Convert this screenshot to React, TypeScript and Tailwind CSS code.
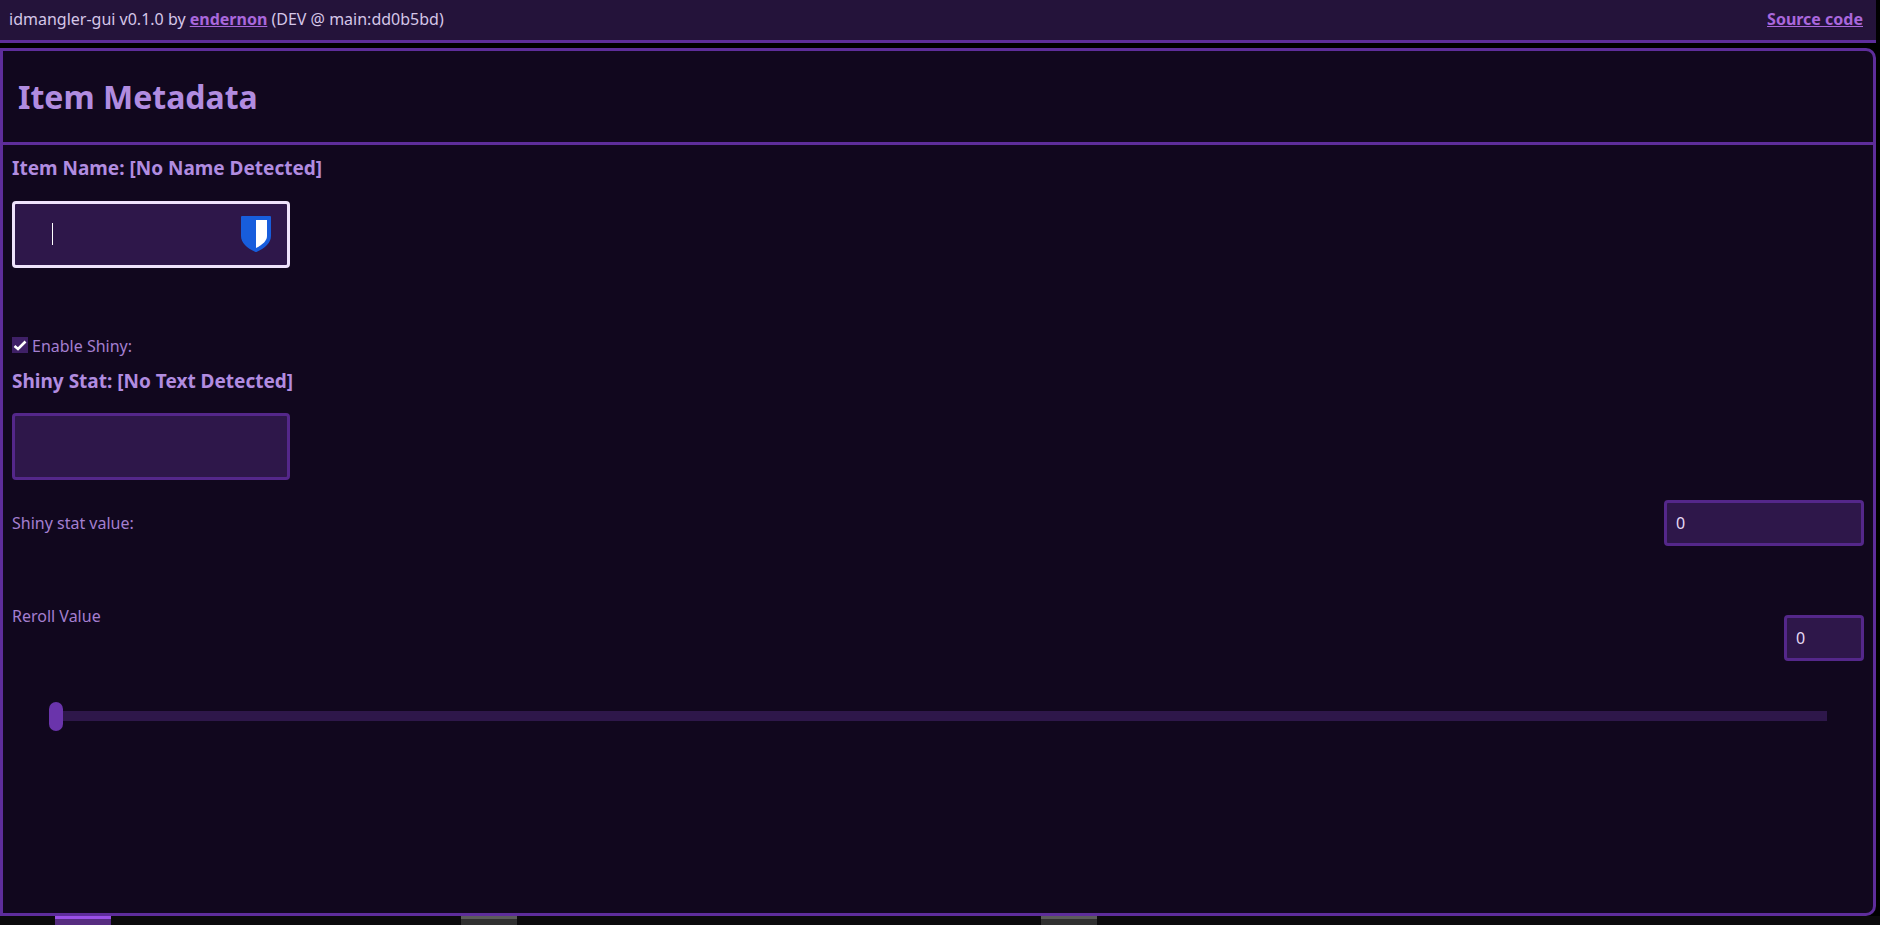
import { useState } from "react";

const fieldClass =
  "rounded-[4px] border-[3px] border-[#54278a] bg-[#2e174a] text-[#e6d9f5] outline-none";

const rangeClass =
  "block h-[29px] w-full appearance-none bg-transparent outline-none " +
  "[&::-webkit-slider-runnable-track]:h-[10px] [&::-webkit-slider-runnable-track]:bg-[#2e174a] " +
  "[&::-webkit-slider-thumb]:mt-[-9px] [&::-webkit-slider-thumb]:h-[29px] [&::-webkit-slider-thumb]:w-[14px] " +
  "[&::-webkit-slider-thumb]:appearance-none [&::-webkit-slider-thumb]:rounded-[7px] [&::-webkit-slider-thumb]:bg-[#6a34ab]";

function ShieldIcon() {
  return (
    <svg width="30" height="36" viewBox="0 0 30 36" aria-hidden="true">
      <path
        d="M1 0H29Q30 0 30 1V20C30 26.5 24 32.5 16 35.7Q15 36.2 14 35.7C6 32.5 0 26.5 0 20V1Q0 0 1 0Z"
        fill="#175ddc"
      />
      <path d="M15 4H26V20C26 24.5 22 28.5 15 32Z" fill="#ffffff" />
    </svg>
  );
}

function Header() {
  return (
    <header className="mr-1 flex justify-between border-b-[3px] border-[#5e2d9b] bg-[#24133a] pt-2 pr-[13px] pb-[10px] pl-[9px] leading-[22px] text-[#d5c6e8]">
      <p>
        idmangler-gui v0.1.0 by{" "}
        <a href="#endernon" className="font-bold text-[#a967dc] underline">
          endernon
        </a>{" "}
        (DEV @ main:dd0b5bd)
      </p>
      <a href="#source" className="font-bold text-[#a967dc] underline">
        Source code
      </a>
    </header>
  );
}

function Metadata() {
  const [name, setName] = useState("");
  const [shiny, setShiny] = useState(true);
  const [stat, setStat] = useState("");
  const [statValue, setStatValue] = useState("0");
  const [reroll, setReroll] = useState("0");

  return (
    <main className="mt-[5px] mr-1 flex-1 rounded-r-[10px] border-[3px] border-[#5e2d9b] bg-[#11071e]">
      <h1 className="border-b-[3px] border-[#5e2d9b] px-[15px] py-6 text-[32px] leading-[43px] font-bold text-[#b18ce0]">
        Item Metadata
      </h1>
      <div className="flex flex-col items-start p-[9px] leading-6 text-[#a47fd0]">
        <label htmlFor="name" className="text-[19px] leading-7 font-bold text-[#b18ce0]">
          Item Name: [No Name Detected]
        </label>
        <div className="relative mt-[19px]">
          <input
            id="name"
            type="text"
            value={name}
            onChange={(e) => setName(e.target.value)}
            className="block h-[67px] w-[278px] rounded-[4px] border-[3px] border-[#efe2fc] bg-[#2e174a] px-[37px] text-[#e6d9f5] outline-none"
          />
          <span className="absolute top-[22px] left-10 h-[22px] w-px bg-white" />
          <span className="absolute top-[15px] right-[19px]">
            <ShieldIcon />
          </span>
        </div>

        <label className="mt-[66px] flex items-start gap-1">
          <span className="relative mt-[3px] flex h-4 w-4">
            <input
              type="checkbox"
              checked={shiny}
              onChange={(e) => setShiny(e.target.checked)}
              className="h-4 w-4 appearance-none bg-[#3f2067]"
            />
            {shiny && (
              <svg className="pointer-events-none absolute inset-0" viewBox="0 0 16 16" aria-hidden="true">
                <path d="M2.5 9L6 12L13.5 4.5" fill="none" stroke="#ffffff" strokeWidth="2.6" />
              </svg>
            )}
          </span>
          Enable Shiny:
        </label>

        <label htmlFor="stat" className="mt-[9px] text-[19px] leading-7 font-bold text-[#b18ce0]">
          Shiny Stat: [No Text Detected]
        </label>
        <input
          id="stat"
          type="text"
          value={stat}
          onChange={(e) => setStat(e.target.value)}
          className={`${fieldClass} mt-[18px] h-[67px] w-[278px] px-[37px]`}
        />

        <div className="mt-5 flex w-full items-center justify-between">
          <label htmlFor="stat-value">Shiny stat value:</label>
          <input
            id="stat-value"
            type="text"
            inputMode="numeric"
            value={statValue}
            onChange={(e) => setStatValue(e.target.value)}
            className={`${fieldClass} h-[46px] w-[200px] px-[9px]`}
          />
        </div>

        <div className="mt-[58px] flex w-full items-start justify-between">
          <label htmlFor="reroll">Reroll Value</label>
          <input
            id="reroll"
            type="text"
            inputMode="numeric"
            value={reroll}
            onChange={(e) => setReroll(e.target.value)}
            className={`${fieldClass} mt-[11px] h-[46px] w-20 px-[9px]`}
          />
        </div>

        <div className="mt-10 w-full px-[37px]">
          <input
            type="range"
            aria-label="Reroll Value"
            min={0}
            max={100}
            value={Number(reroll) || 0}
            onChange={(e) => setReroll(e.target.value)}
            className={rangeClass}
          />
        </div>
      </div>
    </main>
  );
}

function Dock() {
  return (
    <footer className="flex h-[9px] bg-[#0b0a0c] pl-[55px]">
      <div className="w-14 border-t-[3px] border-[#9a50e6] bg-[#562c80]" />
      <div className="ml-[350px] w-14 border-t-[3px] border-[#5c5c5c] bg-[#303030]" />
      <div className="ml-[524px] w-14 border-t-[3px] border-[#5c5c5c] bg-[#303030]" />
    </footer>
  );
}

export default function App() {
  return (
    <div className="flex min-h-screen flex-col bg-black font-['Noto_Sans',sans-serif] text-[16px]">
      <Header />
      <Metadata />
      <Dock />
    </div>
  );
}
